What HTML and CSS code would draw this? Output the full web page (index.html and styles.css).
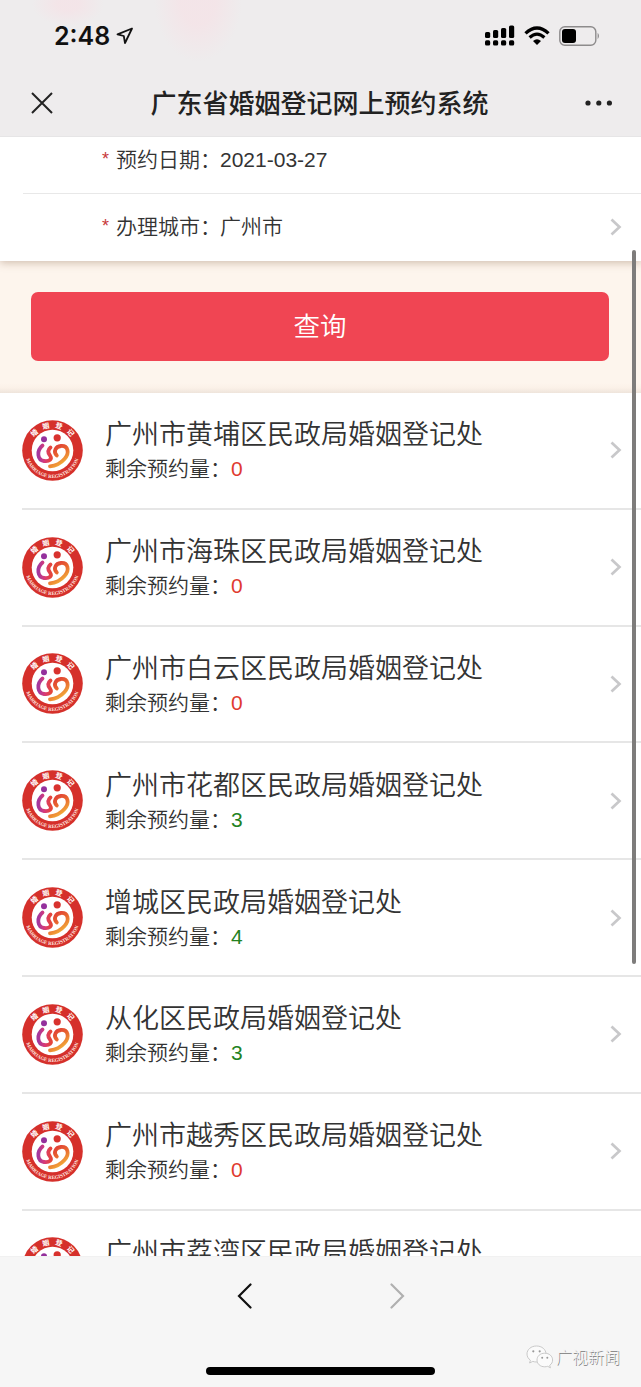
FILE: index.html
```html
<!DOCTYPE html>
<html lang="zh-CN">
<head>
    <meta charset="UTF-8">
    <meta name="viewport" content="width=device-width, initial-scale=1.0">
    <title>广东省婚姻登记网上预约系统</title>
    <link rel="stylesheet" href="styles.css">
</head>
<body>
<svg class="defs" width="0" height="0">
    <defs>
        <linearGradient id="swirlLeft" x1="0" y1="0" x2="1" y2="0">
            <stop offset="0" stop-color="#a3379f"/>
            <stop offset="0.5" stop-color="#d83a78"/>
            <stop offset="1" stop-color="#e5453a"/>
        </linearGradient>
        <linearGradient id="swirlRight" x1="0" y1="0" x2="0.6" y2="1">
            <stop offset="0" stop-color="#dd3038"/>
            <stop offset="0.5" stop-color="#e8642f"/>
            <stop offset="1" stop-color="#f3b03a"/>
        </linearGradient>
        <path id="arcTop" d="M7.7 30.5 A22.8 22.8 0 0 1 53.3 30.5"/>
        <path id="arcBottom" d="M3 30.5 A27.5 27.5 0 0 0 58 30.5"/>
        <symbol id="logo" viewBox="0 0 61 61">
            <circle cx="30.5" cy="30.5" r="30.3" fill="#d5302b"/>
            <circle cx="30.5" cy="30.5" r="20.8" fill="#fff"/>
            <text class="seal-cn" text-anchor="middle"><textPath href="#arcTop" startOffset="53%">婚姻登记</textPath></text>
            <text class="seal-en" text-anchor="middle"><textPath href="#arcBottom" startOffset="50%">MARRIAGE REGISTRATION</textPath></text>
            <circle cx="22" cy="19.2" r="3" fill="#94309c"/>
            <circle cx="35.2" cy="17.8" r="3.6" fill="#d8322e"/>
            <path d="M20.5 25.5 C14 31 15.5 40 22 41 C27.5 41.8 30.5 39 28 35.5 C26 33 25.5 30 28.5 27.5" fill="none" stroke="url(#swirlLeft)" stroke-width="3.8" stroke-linecap="round"/>
            <path d="M34.8 35.5 C31 31.5 33.5 26.5 39 26 C46 25.5 48 33 42.5 39 C39 43 34 45.8 28 46.3" fill="none" stroke="url(#swirlRight)" stroke-width="3.8" stroke-linecap="round"/>
        </symbol>
        <symbol id="more" viewBox="0 0 12 20">
            <path d="M1.5 2.5 L9.5 10 L1.5 17.5" fill="none" stroke="#c8c8ca" stroke-width="2.7"/>
        </symbol>
    </defs>
</svg>

<div class="header">
    <div class="status-bar">
        <div class="status-time">
            <span>2:48</span>
            <svg width="18" height="18" viewBox="0 0 18 18"><path d="M16 1.5 L1.5 7.4 L7.8 9 L9 16 Z" fill="none" stroke="#111" stroke-width="1.8" stroke-linejoin="round"/></svg>
        </div>
        <div class="status-icons">
            <svg width="31" height="22" viewBox="0 0 31 22" fill="#000">
                <rect x="0" y="7" width="5.2" height="6" rx="1.6"/>
                <rect x="8" y="5" width="5.2" height="8" rx="1.6"/>
                <rect x="16" y="3" width="5.2" height="10" rx="1.6"/>
                <rect x="24" y="0.5" width="5.2" height="12.5" rx="1.6"/>
                <rect x="0" y="15.3" width="5.2" height="5.2" rx="1.6"/>
                <rect x="8" y="15.3" width="5.2" height="5.2" rx="1.6"/>
                <rect x="16" y="15.3" width="5.2" height="5.2" rx="1.6"/>
                <rect x="24" y="15.3" width="5.2" height="5.2" rx="1.6"/>
            </svg>
            <svg class="wifi" width="26" height="20" viewBox="0 0 26 20">
                <path d="M1.5 7.4 Q13 -3.4 24.5 7.4" fill="none" stroke="#000" stroke-width="3.3"/>
                <path d="M5.6 11.5 Q13 4.8 20.4 11.5" fill="none" stroke="#000" stroke-width="3.2"/>
                <path d="M9 15 Q13 11.4 17 15 L13 19 Z" fill="#000"/>
            </svg>
            <svg class="battery" width="42" height="20" viewBox="0 0 42 20">
                <rect x="0.8" y="0.8" width="36" height="18.4" rx="5" fill="none" stroke="#8d8b8c" stroke-width="1.4"/>
                <rect x="3" y="3" width="14" height="14" rx="3"/>
                <path d="M38.6 6.8 Q41.4 10 38.6 13.2 Z" fill="#8d8b8c"/>
            </svg>
        </div>
    </div>
    <div class="nav-bar">
        <svg width="22" height="22" viewBox="0 0 22 22"><path d="M1 1 L21 21 M21 1 L1 21" stroke="#222" stroke-width="2"/></svg>
        <div class="nav-title">广东省婚姻登记网上预约系统</div>
        <svg width="28" height="6" viewBox="0 0 28 6" fill="#222"><circle cx="3" cy="3" r="2.6"/><circle cx="13.8" cy="3" r="2.6"/><circle cx="24.4" cy="3" r="2.6"/></svg>
    </div>
</div>

<div class="content">
    <div class="form">
        <div class="form-row date-row">
            <span class="required">*</span>
            <span class="label">预约日期：</span>
            <span class="value">2021-03-27</span>
        </div>
        <div class="form-row city-row">
            <span class="required">*</span>
            <span class="label">办理城市：</span>
            <span class="value">广州市</span>
            <svg class="arrow"><use href="#more"/></svg>
        </div>
    </div>
    <div class="search-area">
        <button class="search-button">查询</button>
    </div>
    <div class="office-list">
        <div class="office">
            <svg class="logo"><use href="#logo"/></svg>
            <div class="office-info">
                <div class="office-name">广州市黄埔区民政局婚姻登记处</div>
                <div class="office-left">剩余预约量：<span class="none">0</span></div>
            </div>
            <svg class="arrow"><use href="#more"/></svg>
        </div>
        <div class="office">
            <svg class="logo"><use href="#logo"/></svg>
            <div class="office-info">
                <div class="office-name">广州市海珠区民政局婚姻登记处</div>
                <div class="office-left">剩余预约量：<span class="none">0</span></div>
            </div>
            <svg class="arrow"><use href="#more"/></svg>
        </div>
        <div class="office">
            <svg class="logo"><use href="#logo"/></svg>
            <div class="office-info">
                <div class="office-name">广州市白云区民政局婚姻登记处</div>
                <div class="office-left">剩余预约量：<span class="none">0</span></div>
            </div>
            <svg class="arrow"><use href="#more"/></svg>
        </div>
        <div class="office">
            <svg class="logo"><use href="#logo"/></svg>
            <div class="office-info">
                <div class="office-name">广州市花都区民政局婚姻登记处</div>
                <div class="office-left">剩余预约量：<span class="some">3</span></div>
            </div>
            <svg class="arrow"><use href="#more"/></svg>
        </div>
        <div class="office">
            <svg class="logo"><use href="#logo"/></svg>
            <div class="office-info">
                <div class="office-name">增城区民政局婚姻登记处</div>
                <div class="office-left">剩余预约量：<span class="some">4</span></div>
            </div>
            <svg class="arrow"><use href="#more"/></svg>
        </div>
        <div class="office">
            <svg class="logo"><use href="#logo"/></svg>
            <div class="office-info">
                <div class="office-name">从化区民政局婚姻登记处</div>
                <div class="office-left">剩余预约量：<span class="some">3</span></div>
            </div>
            <svg class="arrow"><use href="#more"/></svg>
        </div>
        <div class="office">
            <svg class="logo"><use href="#logo"/></svg>
            <div class="office-info">
                <div class="office-name">广州市越秀区民政局婚姻登记处</div>
                <div class="office-left">剩余预约量：<span class="none">0</span></div>
            </div>
            <svg class="arrow"><use href="#more"/></svg>
        </div>
        <div class="office">
            <svg class="logo"><use href="#logo"/></svg>
            <div class="office-info">
                <div class="office-name">广州市荔湾区民政局婚姻登记处</div>
            </div>
        </div>
    </div>
    <div class="scrollbar"></div>
</div>

<div class="footer">
    <div class="footer-nav">
        <svg width="16" height="26" viewBox="0 0 16 26"><path d="M13.5 1.5 L2 13 L13.5 24.5" fill="none" stroke="#111" stroke-width="2.2" stroke-linecap="round"/></svg>
        <svg width="16" height="26" viewBox="0 0 16 26"><path d="M2.5 1.5 L14 13 L2.5 24.5" fill="none" stroke="#b0b0b0" stroke-width="2.2" stroke-linecap="round"/></svg>
    </div>
    <div class="home-bar"></div>
    <div class="watermark">
        <svg width="28" height="24" viewBox="0 0 28 24" fill="#fbfbfb" stroke="#bdbdbd" stroke-width="0.8">
            <path d="M10.5 1 C5 1 1 4.6 1 9 C1 11.6 2.3 13.7 4.4 15.2 L3.6 18 L6.8 16.4 C8 16.8 9.3 17 10.5 17 C16 17 20 13.4 20 9 C20 4.6 16 1 10.5 1 Z"/>
            <path d="M18.7 8.2 C14.2 8.2 11 11.2 11 15 C11 18.8 14.2 21.8 18.7 21.8 C19.8 21.8 20.8 21.6 21.7 21.3 L24.4 22.8 L23.7 20.3 C25.6 19 26.6 17.2 26.6 15 C26.6 11.2 23.3 8.2 18.7 8.2 Z"/>
            <g fill="#999" stroke="none"><circle cx="7.3" cy="6.3" r="1.1"/><circle cx="13.7" cy="6.3" r="1.1"/><circle cx="16.2" cy="12.7" r="1"/><circle cx="21.3" cy="12.7" r="1"/></g>
        </svg>
        <span>广视新闻</span>
    </div>
</div>
</body>
</html>
```
FILE: styles.css
```css
* {
    box-sizing: border-box;
}
body {
    margin: 0;
    height: 1387px;
    display: flex;
    flex-direction: column;
    overflow: hidden;
    background-color: #fff;
    color: #333;
    font-family: "Liberation Sans", "Noto Sans CJK SC", sans-serif;
}
svg {
    display: block;
    flex-shrink: 0;
}
.defs {
    position: absolute;
}
.header {
    height: 137px;
    flex-shrink: 0;
    background:
        radial-gradient(ellipse 36px 22px at 68px 4px, rgba(247, 224, 229, 0.6) 30%, transparent),
        radial-gradient(ellipse 44px 62px at 198px 0, rgba(247, 224, 229, 0.6) 40%, transparent),
        #eeeced;
    border-bottom: 1px solid #e6e5e6;
}
.status-bar {
    display: flex;
    justify-content: space-between;
    align-items: center;
    height: 72px;
    padding: 0 40px 0 54px;
}
.status-time {
    display: flex;
    align-items: center;
    gap: 6px;
    font-family: Inter, sans-serif;
    font-size: 25px;
    font-weight: 600;
    color: #111;
}
.status-icons {
    display: flex;
    align-items: center;
}
.wifi {
    margin-left: 8px;
}
.battery {
    margin-left: 9px;
}
.nav-bar {
    display: flex;
    justify-content: space-between;
    align-items: center;
    height: 62px;
    padding: 0 28px 0 31px;
}
.nav-title {
    padding: 0 0 2px 1px;
    font-family: "Noto Sans CJK SC", sans-serif;
    font-size: 26px;
    line-height: 36px;
    font-weight: 500;
    color: #222;
}
.content {
    position: relative;
    flex: 1;
    min-height: 0;
    overflow: hidden;
}
.form {
    position: relative;
    height: 124px;
    padding-left: 23px;
    background-color: #fff;
    box-shadow: 0 2px 8px rgba(130, 90, 60, 0.35);
}
.form-row {
    display: flex;
    align-items: center;
    padding: 0 19px 0 79px;
    font-size: 21px;
}
.date-row {
    height: 57px;
    padding-bottom: 11px;
    border-bottom: 1px solid #e8e8e8;
}
.city-row {
    height: 67px;
    padding-bottom: 2px;
}
.required {
    width: 14px;
    font-size: 18px;
    color: #c8383a;
}
.label {
    width: 104px;
    white-space: nowrap;
}
.label,
.city-row .value {
    padding-bottom: 3px;
    font-family: "Noto Sans CJK SC", sans-serif;
    font-weight: 350;
    line-height: 30px;
}
.form-row .arrow {
    margin-left: auto;
}
.arrow {
    width: 12px;
    height: 20px;
}
.search-area {
    height: 132px;
    padding: 31px 32px 32px 31px;
    background: linear-gradient(#fdf5ed 122px, #fbf1e8 127px, #eee4db);
}
.search-button {
    display: block;
    width: 100%;
    height: 69px;
    padding: 0 0 4px;
    border: none;
    border-radius: 7px;
    background-color: #f04553;
    color: #fff;
    font-family: "Noto Sans CJK SC", sans-serif;
    font-size: 26.5px;
    font-weight: 350;
}
.office-list {
    padding-left: 22px;
}
.office {
    display: flex;
    align-items: center;
    height: 116.8px;
    padding-right: 19px;
    border-bottom: 2px solid #e6e6e6;
}
.logo {
    width: 61px;
    height: 61px;
    margin-right: 22px;
}
.seal-cn {
    font-family: "Noto Sans CJK SC", sans-serif;
    font-size: 7px;
    font-weight: 700;
    letter-spacing: 5px;
    fill: #fff;
}
.seal-en {
    font-family: "Liberation Serif", serif;
    font-size: 5px;
    font-weight: bold;
    fill: #ffe9e0;
}
.office-info {
    flex: 1;
    height: 72px;
    font-family: "Noto Sans CJK SC", sans-serif;
    font-weight: 350;
}
.office-name {
    font-size: 27px;
    line-height: 38px;
}
.office-left {
    font-size: 21px;
    line-height: 30px;
}
.none,
.some {
    font-family: "Liberation Sans", sans-serif;
}
.none {
    color: #e03a30;
}
.some {
    color: #23821f;
}
.scrollbar {
    position: absolute;
    top: 113px;
    right: 5px;
    width: 4px;
    height: 714px;
    border-radius: 2px;
    background-color: #7e7c7b;
}
.footer {
    position: relative;
    height: 131px;
    flex-shrink: 0;
    padding-top: 26px;
    background-color: #f6f6f6;
    border-top: 1px solid #f1f1f1;
}
.footer-nav {
    display: flex;
    justify-content: center;
    gap: 136px;
}
.home-bar {
    width: 229px;
    height: 8px;
    margin: 58px auto 0;
    border-radius: 4px;
    background-color: #000;
}
.watermark {
    position: absolute;
    right: 21px;
    bottom: 18px;
    display: flex;
    align-items: center;
    gap: 2px;
    font-family: "Noto Sans CJK SC", sans-serif;
    font-size: 16px;
    line-height: 22px;
    font-weight: 300;
    color: #f4f4f4;
    text-shadow: 0.8px 0.8px 0.6px #777;
}
.watermark span {
    padding-bottom: 2px;
}
```
